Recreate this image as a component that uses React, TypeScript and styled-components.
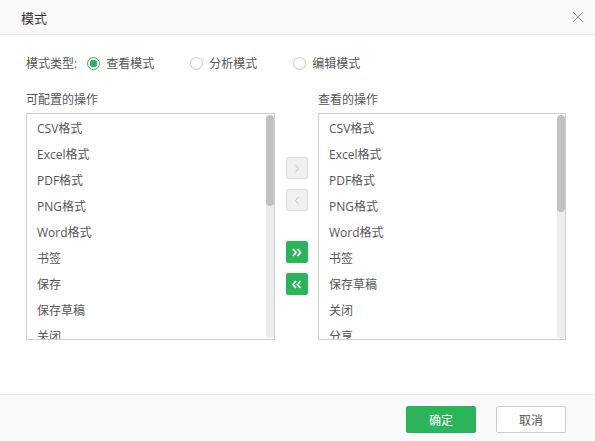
import React, { useState } from "react";
import styled, { createGlobalStyle } from "styled-components";

const GlobalStyle = createGlobalStyle`
  html, body { margin: 0; padding: 0; background: #fff; }
  body {
    font-family: "Open Sans", "Noto Sans CJK SC", sans-serif;
    font-size: 12px;
    color: #555;
  }
`;

const Dialog = styled.div`
  width: 595px;
  height: 441px;
  display: flex;
  flex-direction: column;
  background: #fff;
`;

const Header = styled.div`
  height: 35px;
  box-sizing: border-box;
  display: flex;
  align-items: center;
  justify-content: space-between;
  padding: 0 11px 0 21px;
  background: #f9f9f9;
  border-bottom: 1px solid #e8e8e8;
  font-size: 13px;
  color: #333;
`;

const Close = styled.button`
  border: none;
  background: none;
  padding: 0;
  width: 12px;
  height: 12px;
  cursor: pointer;
  display: flex;
`;

const Body = styled.div`
  flex: 1;
  padding: 17px 29px 0 26px;
`;

const ModeRow = styled.div`
  display: flex;
  align-items: center;
  height: 22px;
  color: #555;
`;

const ModeLabel = styled.span`
  margin-right: 10px;
`;

const Radio = styled.label<{ $checked: boolean }>`
  display: flex;
  align-items: center;
  width: 103px;
  cursor: pointer;
  &::before {
    content: "";
    width: 11px;
    height: 11px;
    border-radius: 50%;
    border: 1px solid ${p => (p.$checked ? "#2bb55a" : "#c8c8c8")};
    background: ${p => (p.$checked ? "radial-gradient(circle, #2bb55a 0 3.5px, #fff 4px)" : "#fff")};
    margin-right: 6px;
  }
`;

const Transfer = styled.div`
  display: grid;
  grid-template-columns: 249px 43px 248px;
  margin-top: 19px;
`;

const Column = styled.div`
  display: flex;
  flex-direction: column;
`;

const ColTitle = styled.div`
  height: 14px;
  line-height: 14px;
  margin-bottom: 6px;
  color: #555;
`;

const ListBox = styled.div`
  position: relative;
  height: 227px;
  box-sizing: border-box;
  border: 1px solid #cfcfcf;
  overflow: hidden;
`;

const List = styled.ul`
  list-style: none;
  margin: 0;
  padding: 2px 0 0;
`;

const Item = styled.li`
  height: 26px;
  line-height: 26px;
  padding-left: 10px;
  color: #555;
  white-space: nowrap;
`;

const Track = styled.div`
  position: absolute;
  top: 1px;
  right: 0;
  bottom: 1px;
  width: 8px;
  border-radius: 4px;
  background: #ececec;
`;

const Thumb = styled.div`
  width: 100%;
  border-radius: 4px;
  background: #c1c1c1;
`;

const Arrows = styled.div`
  display: flex;
  flex-direction: column;
  align-items: center;
  padding-top: 64px;
`;

const ArrowBtn = styled.button<{ $active: boolean; $gap: number }>`
  width: 22px;
  height: 22px;
  margin-top: ${p => p.$gap}px;
  padding: 0;
  display: flex;
  align-items: center;
  justify-content: center;
  border-radius: 2px;
  border: 1px solid ${p => (p.$active ? "#2bb55a" : "#dcdcdc")};
  background: ${p => (p.$active ? "#2bb55a" : "#f0f0f0")};
  cursor: ${p => (p.$active ? "pointer" : "default")};
`;

const Footer = styled.div`
  height: 47px;
  box-sizing: border-box;
  border-top: 1px solid #e8e8e8;
  background: #fafafa;
  display: flex;
  justify-content: flex-end;
  align-items: flex-start;
  padding: 11px 29px 0 0;
  gap: 20px;
`;

const FootBtn = styled.button<{ $primary?: boolean }>`
  width: 70px;
  height: 27px;
  border-radius: 2px;
  font-family: inherit;
  font-size: 12px;
  cursor: pointer;
  border: 1px solid ${p => (p.$primary ? "#2bb55a" : "#cccccc")};
  background: ${p => (p.$primary ? "#2bb55a" : "#fff")};
  color: ${p => (p.$primary ? "#fff" : "#555")};
`;

const Chevron = ({ dir, double, color }: { dir: "l" | "r"; double?: boolean; color: string }) => {
  const one = dir === "r" ? "M0 0 L3 3.5 L0 7" : "M3 0 L0 3.5 L3 7";
  return (
    <svg width={double ? 10 : 6} height="9" viewBox={double ? "-1 -1 10 9" : "-1.5 -1 6 9"}>
      <path d={one} fill="none" stroke={color} strokeWidth={double ? 1.8 : 1} />
      {double && <path d={one} transform="translate(4.5 0)" fill="none" stroke={color} strokeWidth={1.8} />}
    </svg>
  );
};

const OpList = ({ items, thumb }: { items: string[]; thumb: number }) => (
  <ListBox>
    <List>
      {items.map(it => <Item key={it}>{it}</Item>)}
    </List>
    <Track>
      <Thumb style={{ height: thumb }} />
    </Track>
  </ListBox>
);

const leftItems = ["CSV格式", "Excel格式", "PDF格式", "PNG格式", "Word格式", "书签", "保存", "保存草稿", "关闭"];
const rightItems = ["CSV格式", "Excel格式", "PDF格式", "PNG格式", "Word格式", "书签", "保存草稿", "关闭", "分享"];
const modes = ["查看模式", "分析模式", "编辑模式"];

export default function App() {
  const [mode, setMode] = useState(0);
  return (
    <>
      <GlobalStyle />
      <Dialog>
        <Header>
          <span>模式</span>
          <Close>
            <svg width="12" height="12" viewBox="0 0 12 12">
              <path d="M1 1 L11 11 M11 1 L1 11" stroke="#999" strokeWidth="1" />
            </svg>
          </Close>
        </Header>
        <Body>
          <ModeRow>
            <ModeLabel>模式类型:</ModeLabel>
            {modes.map((m, i) => (
              <Radio key={m} $checked={mode === i} onClick={() => setMode(i)}>
                {m}
              </Radio>
            ))}
          </ModeRow>
          <Transfer>
            <Column>
              <ColTitle>可配置的操作</ColTitle>
              <OpList items={leftItems} thumb={91} />
            </Column>
            <Arrows>
              <ArrowBtn $active={false} $gap={0}><Chevron dir="r" color="#c4c4c4" /></ArrowBtn>
              <ArrowBtn $active={false} $gap={10}><Chevron dir="l" color="#c4c4c4" /></ArrowBtn>
              <ArrowBtn $active $gap={30}><Chevron dir="r" double color="#fff" /></ArrowBtn>
              <ArrowBtn $active $gap={10}><Chevron dir="l" double color="#fff" /></ArrowBtn>
            </Arrows>
            <Column>
              <ColTitle>查看的操作</ColTitle>
              <OpList items={rightItems} thumb={97} />
            </Column>
          </Transfer>
        </Body>
        <Footer>
          <FootBtn $primary>确定</FootBtn>
          <FootBtn>取消</FootBtn>
        </Footer>
      </Dialog>
    </>
  );
}
